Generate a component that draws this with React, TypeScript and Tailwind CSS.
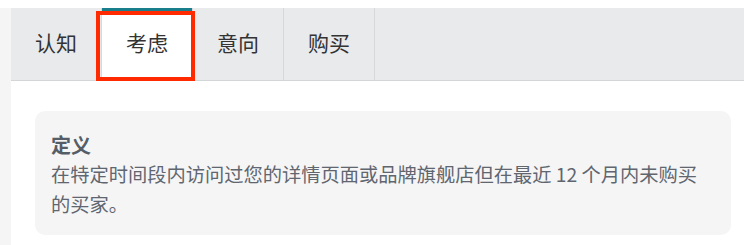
import React from 'react';

const tabs = ['认知', '考虑', '意向', '购买'];

export default function App() {
  const active = 1;

  return (
    <div
      className="w-[744px] h-[245px] bg-white pt-[8px] overflow-hidden"
      style={{ fontFamily: '"Noto Sans CJK SC", "Noto Sans", sans-serif' }}
    >
      <div className="flex h-[237px]">
        {/* left gutter */}
        <div className="w-[11px] bg-[#f5f5f5]" />

        <div className="flex-1 flex flex-col">
          {/* Tab bar */}
          <div className="relative flex h-[73px] bg-[#e9eaec] border-b border-[#d3d6d9]">
            {tabs.map((t, i) => (
              <div
                key={t}
                className={`relative w-[91px] flex items-center justify-center text-[21px] text-[#333] border-r border-[#d6d9dc] ${
                  i === active ? 'bg-white' : ''
                }`}
              >
                {i === active && (
                  <div className="absolute top-0 left-0 right-0 h-[3px] bg-[#1a7f8c]" />
                )}
                <span className="mt-[-2px]">{t}</span>
              </div>
            ))}
            {/* annotation box around active tab */}
            <div className="absolute left-[85px] top-[3px] w-[99px] h-[70px] border-[4px] border-[#ff2a00]" />
          </div>

          {/* Content */}
          <div className="flex-1 pl-[24px] pr-[13px] pt-[30px]">
            <div className="bg-[#f5f5f5] rounded-[10px] h-[124px] pl-[16px] pr-[30px] pt-[20px]">
              <div className="text-[20px] leading-[28px] font-bold text-[#555d67]">定义</div>
              <div className="text-[19.25px] leading-[30px] text-[#5f6670]">
                在特定时间段内访问过您的详情页面或品牌旗舰店但在最近 12 个月内未购买的买家。
              </div>
            </div>
          </div>
        </div>
      </div>
    </div>
  );
}
